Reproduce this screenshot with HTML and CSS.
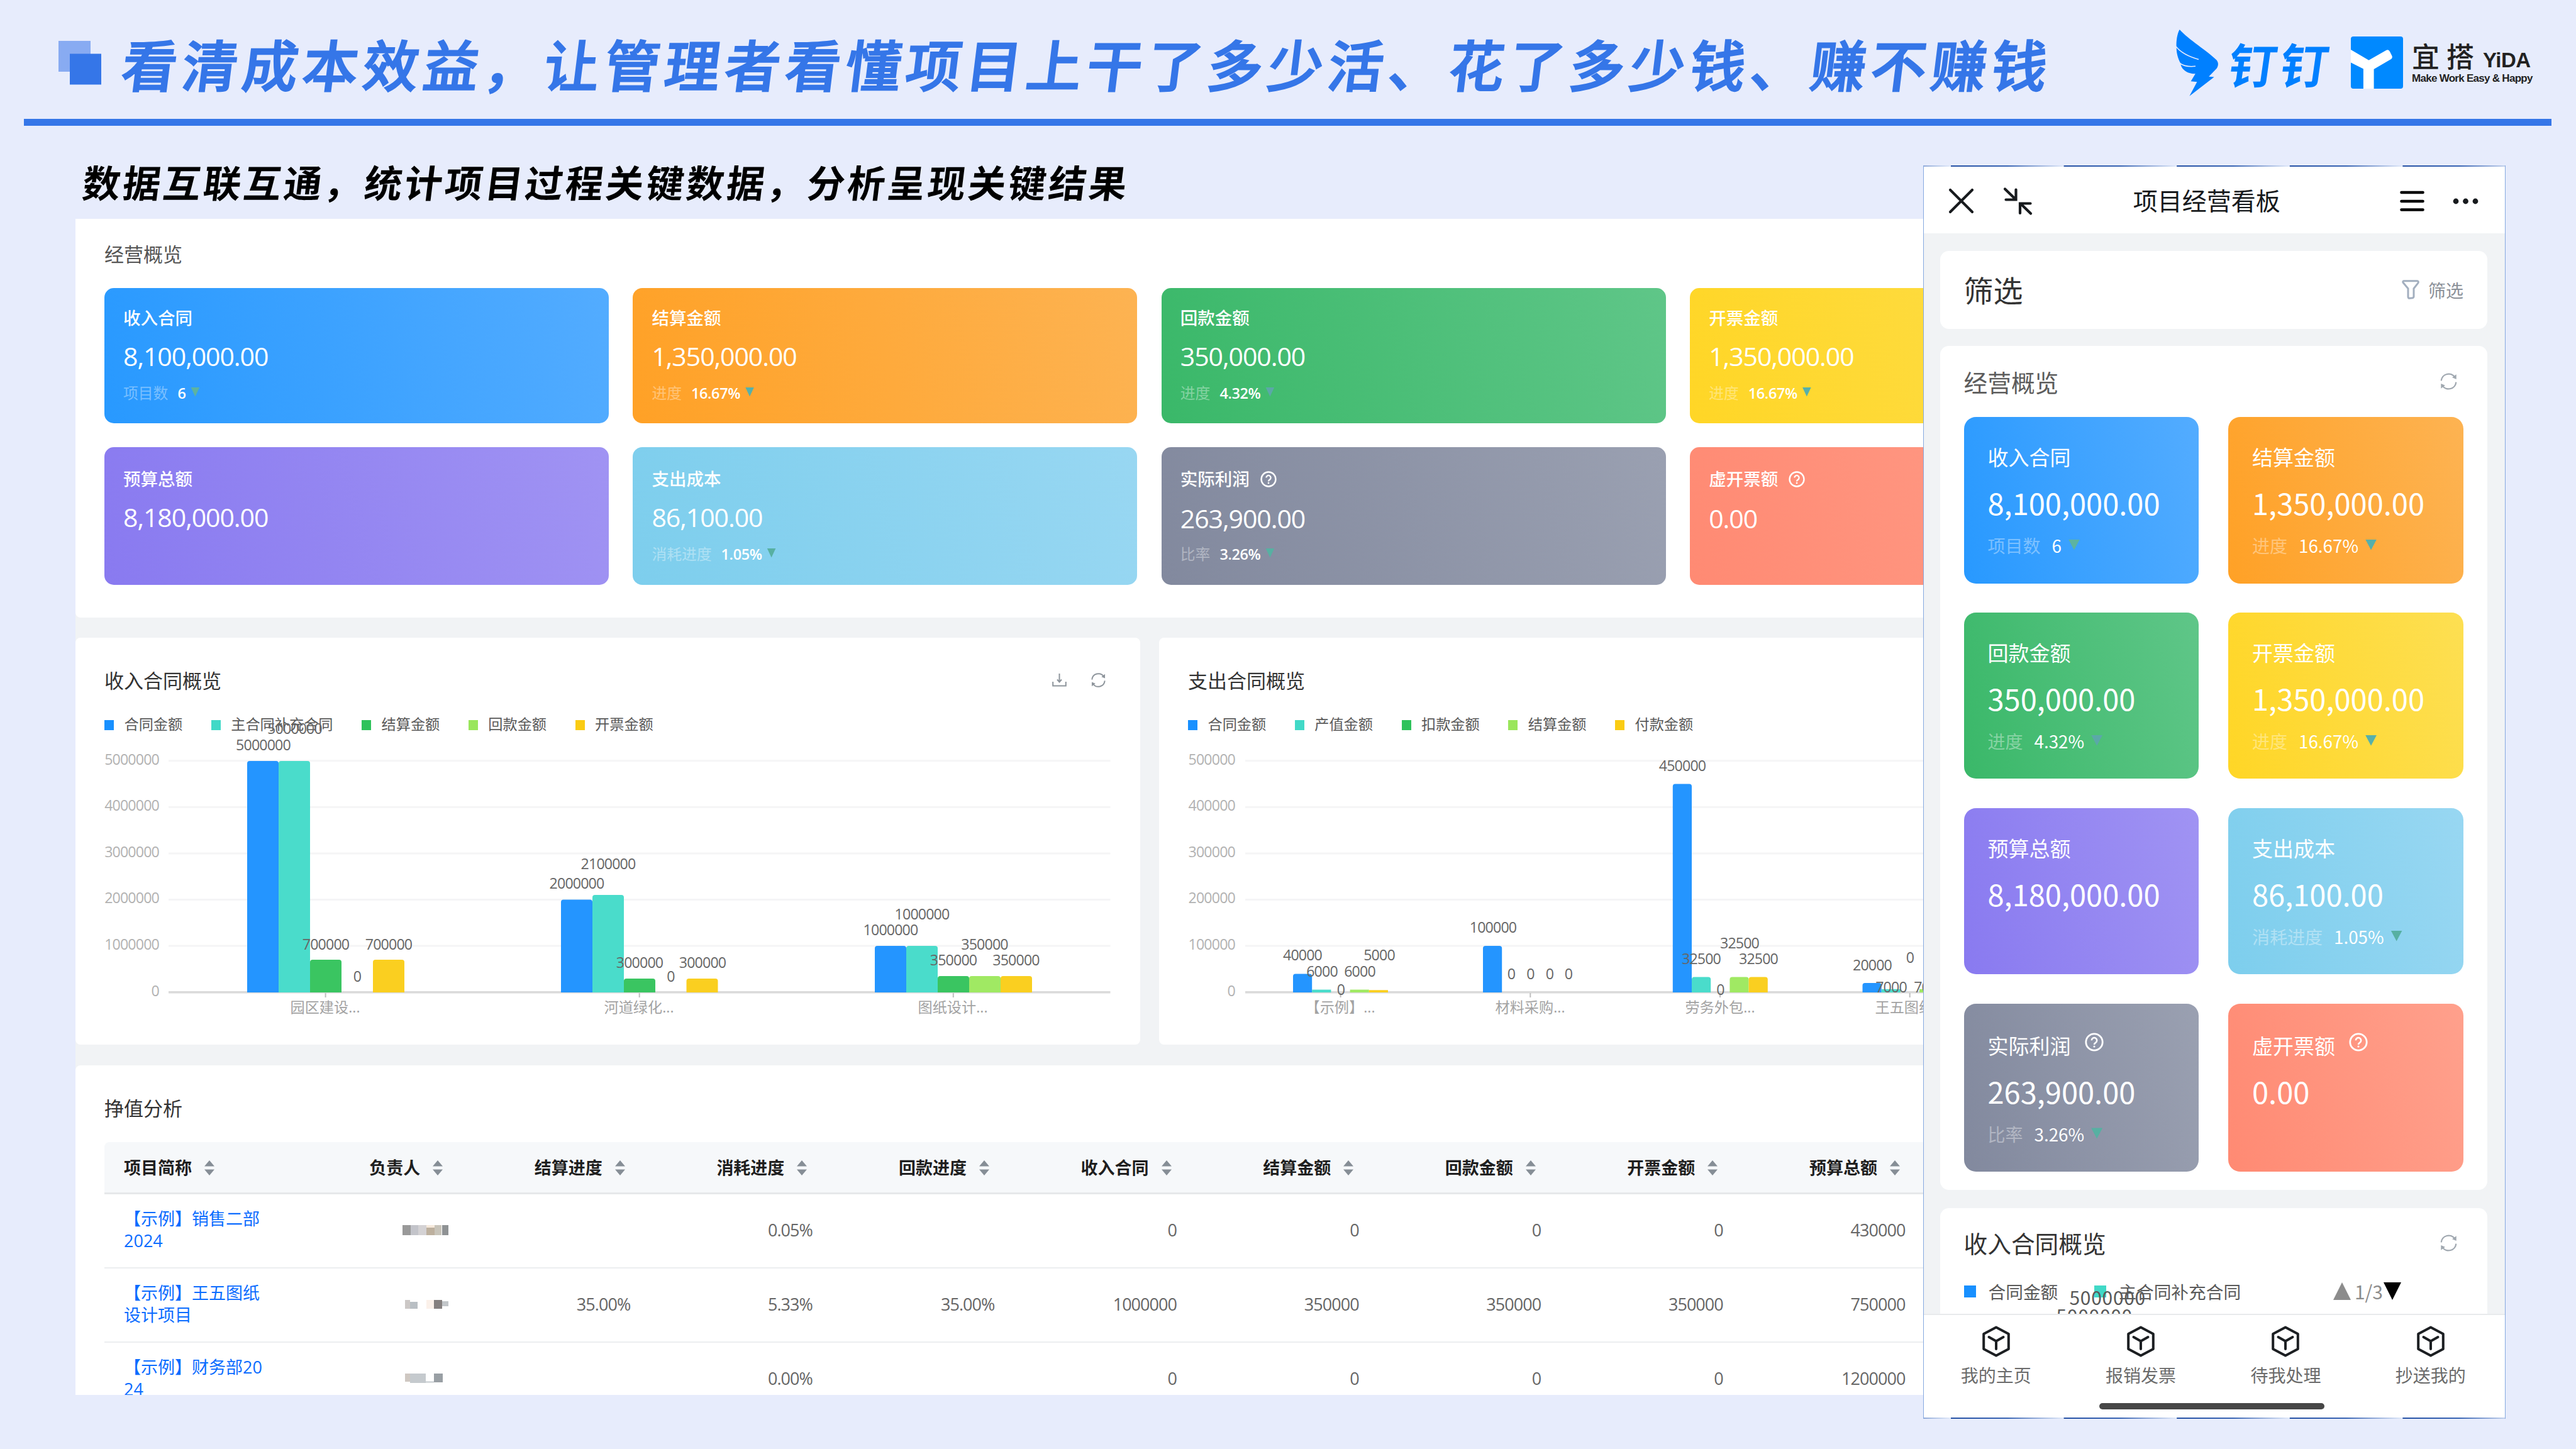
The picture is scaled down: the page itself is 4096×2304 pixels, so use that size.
FILE: index.html
```html
<!DOCTYPE html>
<html lang="zh-CN">
<head>
<meta charset="utf-8">
<title>项目经营看板</title>
<link rel="stylesheet" href="styles.css">
</head>
<body>
<svg class="sprite" aria-hidden="true">
  <symbol id="refresh" viewBox="0 0 28 28"><g fill="none" stroke="currentColor" stroke-width="2.2"><path d="M2.6 13A11.5 11.5 0 0 1 23.6 7.6"/><path d="M25.4 15A11.5 11.5 0 0 1 4.4 20.4"/></g><path d="M25.8 3.2v7.4l-6.4-2.6zM2.2 24.8v-7.4l6.4 2.6z" fill="currentColor"/></symbol>
  <symbol id="help" viewBox="0 0 30 30"><circle cx="15" cy="15" r="13.2" fill="none" stroke="currentColor" stroke-width="2.8"/><path d="M10.8 12.2a4.2 4.2 0 1 1 6.4 3.6c-1.5.9-2.2 1.6-2.2 3.2" fill="none" stroke="currentColor" stroke-width="2.6"/><circle cx="15" cy="22" r="1.6" fill="currentColor"/></symbol>
  <symbol id="cube" viewBox="0 0 46 50"><path d="M23 2.5L42.8 13v24L23 47.5 3.2 37V13z" fill="none" stroke="currentColor" stroke-width="4" stroke-linejoin="round"/><path d="M11.5 18L23 24.5 34.500 18M23 24.500V37" fill="none" stroke="currentColor" stroke-width="4" stroke-linecap="round" stroke-linejoin="round"/></symbol>
  <symbol id="sort" viewBox="0 0 16 24"><path d="M8 0l8 9.500H0zM8 24l8-9.500H0z" fill="#868e96"/></symbol>
</svg>

<header class="topbar">
  <svg class="mark" viewBox="0 0 68 70"><rect width="51" height="49" fill="#88abf2"/><rect x="18" y="20.500" width="50" height="49" fill="#3576e8"/></svg>
  <h1 class="headline">看清成本效益，让管理者看懂项目上干了多少活、花了多少钱、赚不赚钱</h1>
  <div class="brands">
    <svg class="wing" viewBox="0 0 68 106"><path d="M5.700 0C20 16 50 34 64.500 48.500 67.500 52 68 57 64.500 62L52.200 74.800 60.600 75.400 21.400 105.800 33.400 83.200 23.600 82.300 30.800 70.200C20 71 8 64 7.300 53.700 5 50 .5 40 .7 28.600 0 18 2 6 5.700 0z" fill="#0080ff"/><path d="M0 27C7 36 20 43 36 47.500M5 53C12 58 22 59.500 31 58.300" fill="none" stroke="#e7ecfc" stroke-width="1.600"/></svg>
    <span class="ding">钉钉</span>
    <svg class="yida-mark" viewBox="0 0 83 83"><rect width="83" height="83" rx="4" fill="#0089ff"/><path d="M0 21L28.500 37.700 56.500 21.800Q60 20 62 24L65.500 31Q66.500 34 64 36L36.600 51.900V83H19.900V51.600L0 41.500z" fill="#fff"/></svg>
    <div class="yida">
      <div class="yida-name"><span class="yida-cn">宜搭</span><span class="yida-en">YiDA</span></div>
      <div class="yida-tag">Make Work Easy &amp; Happy</div>
    </div>
  </div>
</header>
<div class="rule"></div>

<h2 class="lead">数据互联互通，统计项目过程关键数据，分析呈现关键结果</h2>

<main class="board">
  <section class="panel overview">
    <h3 class="panel-title soft">经营概览</h3>
    <div class="tiles">
      <div class="tile blue"><div class="t-label">收入合同</div><div class="t-num">8,100,000.00</div><div class="t-sub"><span>项目数</span><b>6</b><i class="tri green"></i></div></div>
      <div class="tile orange"><div class="t-label">结算金额</div><div class="t-num">1,350,000.00</div><div class="t-sub"><span>进度</span><b>16.67%</b><i class="tri teal"></i></div></div>
      <div class="tile leaf"><div class="t-label">回款金额</div><div class="t-num">350,000.00</div><div class="t-sub"><span>进度</span><b>4.32%</b><i class="tri steel"></i></div></div>
      <div class="tile yellow"><div class="t-label">开票金额</div><div class="t-num">1,350,000.00</div><div class="t-sub"><span>进度</span><b>16.67%</b><i class="tri teal"></i></div></div>
      <div class="tile purple"><div class="t-label">预算总额</div><div class="t-num">8,180,000.00</div></div>
      <div class="tile sky"><div class="t-label">支出成本</div><div class="t-num">86,100.00</div><div class="t-sub"><span>消耗进度</span><b>1.05%</b><i class="tri sea"></i></div></div>
      <div class="tile slate helped"><div class="t-label">实际利润<svg class="help"><use href="#help"/></svg></div><div class="t-num">263,900.00</div><div class="t-sub"><span>比率</span><b>3.26%</b><i class="tri sea"></i></div></div>
      <div class="tile coral helped"><div class="t-label">虚开票额<svg class="help"><use href="#help"/></svg></div><div class="t-num">0.00</div></div>
    </div>
  </section>

  <div class="charts">
    <section class="panel chart-panel">
      <div class="panel-head"><h3 class="panel-title">收入合同概览</h3>
        <div class="tools"><svg class="dl" viewBox="0 0 23 21"><path d="M1.200 13v6.500h20.600V13M11.500 0v13M8 9.500l3.500 4 3.500-4" fill="none" stroke="currentColor" stroke-width="2"/></svg><svg class="rf"><use href="#refresh"/></svg></div>
      </div>
      <ul class="legend"><li class="c1">合同金额</li><li class="c2">主合同补充合同</li><li class="c3">结算金额</li><li class="c4">回款金额</li><li class="c5">开票金额</li></ul>
      <svg class="plot" width="1600" height="470" viewBox="166 1166 1600 470">
        <path class="grid" d="M268 1209.700H1765.500M268 1283.300H1765.500M268 1356.900H1765.500M268 1430.500H1765.500M268 1504.100H1765.500"/>
        <path class="axis" d="M268 1577.700H1765.500"/><path class="tick" d="M517.600 1579v7M1016.700 1579v7M1515.800 1579v7"/>
        <g class="ylab"><text x="253" y="1215.500">5000000</text><text x="253" y="1289">4000000</text><text x="253" y="1362.500">3000000</text><text x="253" y="1436.200">2000000</text><text x="253" y="1510">1000000</text><text x="253" y="1583.500">0</text></g>
        <g class="f1"><path d="M393 1578V1214q0-4 4-4h42q4 0 4 4V1578z"/><path d="M892 1578V1434.500q0-4 4-4h42q4 0 4 4V1578z"/><path d="M1391 1578V1508q0-4 4-4h42q4 0 4 4V1578z"/></g>
        <g class="f2"><path d="M443 1578V1214q0-4 4-4h42q4 0 4 4V1578z"/><path d="M942 1578V1427q0-4 4-4h42q4 0 4 4V1578z"/><path d="M1441 1578V1508q0-4 4-4h42q4 0 4 4V1578z"/></g>
        <g class="f3"><path d="M493 1578V1530q0-4 4-4h42q4 0 4 4V1578z"/><path d="M992 1578V1560q0-4 4-4h42q4 0 4 4V1578z"/><path d="M1491 1578V1556q0-4 4-4h42q4 0 4 4V1578z"/></g>
        <g class="f4"><path d="M1541 1578V1556q0-4 4-4h42q4 0 4 4V1578z"/></g>
        <g class="f5"><path d="M593 1578V1530q0-4 4-4h42q4 0 4 4V1578z"/><path d="M1091.500 1578V1560q0-4 4-4h42q4 0 4 4V1578z"/><path d="M1591 1578V1556q0-4 4-4h42q4 0 4 4V1578z"/></g>
        <g class="vlab"><text x="418.500" y="1192.500">5000000</text><text x="468.500" y="1167">5000000</text><text x="518" y="1510">700000</text><text x="568" y="1560.500">0</text><text x="618" y="1510">700000</text>
        <text x="917" y="1413">2000000</text><text x="967" y="1381.500">2100000</text><text x="1017" y="1539">300000</text><text x="1066.500" y="1560.500">0</text><text x="1117" y="1539">300000</text>
        <text x="1416" y="1486.500">1000000</text><text x="1466" y="1461.500">1000000</text><text x="1516" y="1535">350000</text><text x="1565.500" y="1510">350000</text><text x="1615.500" y="1535">350000</text></g>
        <g class="xlab"><text x="517" y="1610">园区建设...</text><text x="1016" y="1610">河道绿化...</text><text x="1515" y="1610">图纸设计...</text></g>
      </svg>
    </section>
    <section class="panel chart-panel">
      <div class="panel-head"><h3 class="panel-title">支出合同概览</h3></div>
      <ul class="legend"><li class="c1">合同金额</li><li class="c2">产值金额</li><li class="c3">扣款金额</li><li class="c4">结算金额</li><li class="c5">付款金额</li></ul>
      <svg class="plot" width="1600" height="470" viewBox="1889 1166 1600 470">
        <path class="grid" d="M1980 1209.700H3480M1980 1283.300H3480M1980 1356.900H3480M1980 1430.500H3480M1980 1504.100H3480"/>
        <path class="axis" d="M1980 1577.700H3480"/><path class="tick" d="M2131.600 1579v7M2433.300 1579v7M2735 1579v7M3036.700 1579v7"/>
        <g class="ylab"><text x="1964" y="1215.500">500000</text><text x="1964" y="1289">400000</text><text x="1964" y="1362.500">300000</text><text x="1964" y="1436.200">200000</text><text x="1964" y="1510">100000</text><text x="1964" y="1583.500">0</text></g>
        <g class="f1"><path d="M2056 1578V1552.500q0-4 4-4h22.200q4 0 4 4V1578z"/><path d="M2358 1578V1508q0-4 4-4h22.200q4 0 4 4V1578z"/><path d="M2659.800 1578V1250.500q0-4 4-4h22.200q4 0 4 4V1578z"/><path d="M2961.500 1578V1567q0-4 4-4h22.200q4 0 4 4V1578z"/></g>
        <g class="f2"><path d="M2086.200 1578v-4.400h30.200v4.400z"/><path d="M2690 1578V1557.500q0-4 4-4h22.200q4 0 4 4V1578z"/><path d="M2991.700 1578v-5.200h30.200v5.200z"/></g>
        <g class="f4"><path d="M2146.600 1578v-4.400h30.200v4.400z"/><path d="M2750.400 1578V1557.500q0-4 4-4h22.200q4 0 4 4V1578z"/><path d="M3052 1578v-5.200h30.200v5.200z"/></g>
        <g class="f5"><path d="M2176.800 1578v-3.700h30.200v3.700z"/><path d="M2780.600 1578V1557.500q0-4 4-4h22.200q4 0 4 4V1578z"/></g>
        <g class="vlab"><text x="2071" y="1527">40000</text><text x="2102" y="1552.500">6000</text><text x="2132" y="1582">0</text><text x="2162" y="1552.500">6000</text><text x="2193" y="1527">5000</text>
        <text x="2374" y="1482.500">100000</text><text x="2403" y="1557">0</text><text x="2433.500" y="1557">0</text><text x="2464" y="1557">0</text><text x="2494" y="1557">0</text>
        <text x="2675" y="1225.500">450000</text><text x="2705" y="1533">32500</text><text x="2735.500" y="1582">0</text><text x="2766" y="1508">32500</text><text x="2796" y="1533">32500</text>
        <text x="2977" y="1542.500">20000</text><text x="3007" y="1578">7000</text><text x="3037" y="1531">0</text><text x="3068" y="1578">7000</text></g>
        <g class="xlab"><text x="2131" y="1610">【示例】...</text><text x="2433" y="1610">材料采购...</text><text x="2735" y="1610">劳务外包...</text><text x="3037" y="1610">王五图纸...</text></g>
      </svg>
    </section>
  </div>

  <section class="panel table-panel">
    <h3 class="panel-title">挣值分析</h3>
    <table class="ev">
      <thead><tr>
        <th>项目简称<svg class="sort"><use href="#sort"/></svg></th><th>负责人<svg class="sort"><use href="#sort"/></svg></th><th>结算进度<svg class="sort"><use href="#sort"/></svg></th><th>消耗进度<svg class="sort"><use href="#sort"/></svg></th><th>回款进度<svg class="sort"><use href="#sort"/></svg></th><th>收入合同<svg class="sort"><use href="#sort"/></svg></th><th>结算金额<svg class="sort"><use href="#sort"/></svg></th><th>回款金额<svg class="sort"><use href="#sort"/></svg></th><th>开票金额<svg class="sort"><use href="#sort"/></svg></th><th>预算总额<svg class="sort"><use href="#sort"/></svg></th>
      </tr></thead>
      <tbody>
        <tr><td><a>【示例】销售二部<br>2024</a></td><td><svg class="mosaic" viewBox="0 0 73 16"><path fill="#999" d="M0 0h13v16H0z"/><path fill="#c3c4ca" d="M13 0h12v16H13z"/><path fill="#d4d2d4" d="M25 0h13v16H25z"/><path fill="#bdb09e" d="M38 4h13v12H38z"/><path fill="#f6e9dc" d="M38 0h13v4H38z"/><path fill="#c8c4ba" d="M51 0h11v16H51z"/><path fill="#8f9294" d="M63 0h10v16H63z"/></svg></td><td></td><td>0.05%</td><td></td><td>0</td><td>0</td><td>0</td><td>0</td><td>430000</td></tr>
        <tr><td><a>【示例】王五图纸<br>设计项目</a></td><td><svg class="mosaic" viewBox="0 0 73 16"><path fill="#ccc8c6" d="M4 1h8v14H4z"/><path fill="#b9bfc4" d="M12 4h12v11H12z"/><path fill="#fbf1ea" d="M38 1h12v14H38z"/><path fill="#85807f" d="M50 1h13v14H50z"/><path fill="#c2c6c9" d="M63 3h10v8H63z"/></svg></td><td>35.00%</td><td>5.33%</td><td>35.00%</td><td>1000000</td><td>350000</td><td>350000</td><td>350000</td><td>750000</td></tr>
        <tr><td><a>【示例】财务部20<br>24</a></td><td><svg class="mosaic" viewBox="0 0 73 16"><path fill="#cfc8c2" d="M4 0h8v13H4z"/><path fill="#c5cace" d="M12 0h25v15H12z"/><path fill="#d5d9dc" d="M37 12h13v3H37z"/><path fill="#999fa4" d="M50 0h14v14H50z"/></svg></td><td></td><td>0.00%</td><td></td><td>0</td><td>0</td><td>0</td><td>0</td><td>1200000</td></tr>
      </tbody>
    </table>
  </section>
</main>

<aside class="phone">
  <div class="ph-edge"></div>
  <div class="ph-head">
    <svg class="ph-left" width="134" height="46" viewBox="0 0 134 46"><g fill="none" stroke="#171a1d" stroke-width="4.200" stroke-linecap="round"><path d="M3 5l35 35M38 5L3 40"/><path d="M90 3.500L106 19M107.500 4.500V20.500H91.500"/><path d="M131 42.500L115.500 27.500M114 42V26.500H130.500"/></g></svg>
    <div class="ph-title">项目经营看板</div>
    <svg class="ph-right" width="126" height="34" viewBox="0 0 126 34"><path d="M2.500 3h34M2.500 17h34M2.500 30.500h34" stroke="#000" stroke-width="4.600" stroke-linecap="round"/><g fill="#171a1d"><circle cx="89" cy="17" r="4.400"/><circle cx="104.500" cy="17" r="4.400"/><circle cx="120" cy="17" r="4.400"/></g></svg>
  </div>
  <div class="ph-body">
    <section class="ph-card ph-filter">
      <h3>筛选</h3>
      <div class="ph-fbtn"><svg width="28" height="31" viewBox="0 0 28 31"><path d="M3.500 1.800h21q2.500 0 1.500 3l-7 9v12.500q0 2-2 2.500l-4.500.5q-2.300 0-2.500-2.300V13.800l-8-9.500q-.8-2.500 1.500-2.500z" fill="none" stroke="#a3afbf" stroke-width="3"/></svg>筛选</div>
    </section>
    <section class="ph-card ph-over">
      <div class="ph-row"><h3>经营概览</h3><svg class="rf"><use href="#refresh"/></svg></div>
      <div class="ph-tiles">
        <div class="tile blue"><div class="t-label">收入合同</div><div class="t-num">8,100,000.00</div><div class="t-sub"><span>项目数</span><b>6</b><i class="tri green"></i></div></div>
        <div class="tile orange"><div class="t-label">结算金额</div><div class="t-num">1,350,000.00</div><div class="t-sub"><span>进度</span><b>16.67%</b><i class="tri teal"></i></div></div>
        <div class="tile leaf"><div class="t-label">回款金额</div><div class="t-num">350,000.00</div><div class="t-sub"><span>进度</span><b>4.32%</b><i class="tri steel"></i></div></div>
        <div class="tile yellow"><div class="t-label">开票金额</div><div class="t-num">1,350,000.00</div><div class="t-sub"><span>进度</span><b>16.67%</b><i class="tri teal"></i></div></div>
        <div class="tile purple"><div class="t-label">预算总额</div><div class="t-num">8,180,000.00</div></div>
        <div class="tile sky"><div class="t-label">支出成本</div><div class="t-num">86,100.00</div><div class="t-sub"><span>消耗进度</span><b>1.05%</b><i class="tri sea"></i></div></div>
        <div class="tile slate helped"><div class="t-label">实际利润<svg class="help"><use href="#help"/></svg></div><div class="t-num">263,900.00</div><div class="t-sub"><span>比率</span><b>3.26%</b><i class="tri sea"></i></div></div>
        <div class="tile coral helped"><div class="t-label">虚开票额<svg class="help"><use href="#help"/></svg></div><div class="t-num">0.00</div></div>
      </div>
    </section>
    <section class="ph-card ph-income">
      <div class="ph-row dark"><h3>收入合同概览</h3><svg class="rf"><use href="#refresh"/></svg></div>
      <div class="ph-legend">
        <span class="c1">合同金额</span><span class="c2">主合同补充合同</span>
        <div class="pager"><svg width="28" height="28" viewBox="0 0 28 28"><path d="M14 0l14 28H0z" fill="#8c8c8c"/></svg>1/3<svg width="28" height="28" viewBox="0 0 28 28"><path d="M14 28L28 0H0z" fill="#000"/></svg></div>
        <div class="clash one">5000000</div><div class="clash two">5000000</div>
      </div>
    </section>
  </div>
  <nav class="ph-tabs">
    <div><svg><use href="#cube"/></svg>我的主页</div><div><svg><use href="#cube"/></svg>报销发票</div><div><svg><use href="#cube"/></svg>待我处理</div><div><svg><use href="#cube"/></svg>抄送我的</div>
  </nav>
  <div class="ph-home"></div>
  <div class="ph-edge"></div>
</aside>
</body>
</html>
```
FILE: styles.css
```css
* { box-sizing: border-box; margin: 0; padding: 0; }
html, body { width: 4096px; height: 2304px; overflow: hidden; }
body {
  position: relative;
  background: #e7ecfc;
  font-family: "Open Sans", "Noto Sans CJK SC", sans-serif;
  color: #333;
}
svg { display: block; flex: none; }
.sprite { position: absolute; width: 0; height: 0; }
h1, h2, h3 { font-weight: 400; }
ul { list-style: none; }

/* slide header */
.topbar { display: flex; align-items: center; height: 189px; padding: 10px 66px 0 93px; }
.mark { width: 68px; height: 70px; }
.headline {
  margin-left: 34px;
  font: 500 88px/120px "Noto Sans CJK SC", sans-serif;
  letter-spacing: 7.900px;
  color: #3576e8;
  -webkit-text-stroke: 2.200px #3576e8;
  white-space: nowrap;
  transform: skewX(-7deg);
}
.brands { display: flex; align-items: center; margin-left: auto; }
.wing { width: 68px; height: 106px; }
.ding {
  margin-left: 17px;
  font: 700 76px/100px "Noto Sans CJK SC", sans-serif;
  letter-spacing: 6px;
  color: #0080ff;
  transform: skewX(-8deg);
}
.yida-mark { width: 83px; height: 83px; margin-left: 29px; }
.yida { margin-left: 14px; width: 195px; color: #222; }
.yida-name { display: flex; align-items: baseline; height: 50px; }
.yida-cn { font: 500 44px/50px "Noto Sans CJK SC", sans-serif; letter-spacing: 11px; }
.yida-en { margin-left: 3px; font: 700 33px/50px "Liberation Sans", sans-serif; letter-spacing: -.5px; }
.yida-tag { font: 700 17px/24px "Liberation Sans", sans-serif; letter-spacing: -.720px; white-space: nowrap; }
.rule { height: 10.500px; margin: 0 39px 0 38px; background: #3576e8; }

.lead {
  height: 148px;
  padding: 48px 0 0 132px;
  font: 700 60px/80px "Noto Sans CJK SC", sans-serif;
  letter-spacing: 4px;
  color: #000;
  transform: skewX(-7deg);
  transform-origin: 0 60%;
}

/* dashboard */
.board {
  display: flex; flex-direction: column; gap: 32px;
  width: 2940px; height: 1870.500px; margin-left: 120px;
  background: #f1f3f5; overflow: hidden;
}
.panel { flex: none; width: 3420px; background: #fff; border-radius: 8px; padding: 0 46px; }
.panel-title { font-size: 31px; line-height: 40px; color: #333; }
.panel-title.soft { color: #555; }
.overview { height: 634px; padding-top: 36px; border-radius: 0 0 8px 8px; }
.tiles { display: grid; grid-template-columns: repeat(4, 802px); grid-template-rows: 215px 219px; gap: 38px 38.400px; margin-top: 34px; }

.tile { color: #fff; border-radius: 15px; padding: 28px 30px; }
.tile:nth-child(n+5) { padding-top: 31px; }
.blue { background: linear-gradient(75deg, #2899ff, #53acff); }
.orange { background: linear-gradient(75deg, #ffa126, #fdb352); }
.leaf { background: linear-gradient(75deg, #3ab869, #5fc688); }
.yellow { background: linear-gradient(75deg, #ffd626, #fddf52); }
.purple { background: linear-gradient(75deg, #897af0, #a093f3); }
.sky { background: linear-gradient(75deg, #7dceed, #98d7f2); }
.slate { background: linear-gradient(75deg, #82899e, #9aa0b1); }
.coral { background: linear-gradient(75deg, #ff8a73, #ffa08c); }
.t-label { display: flex; align-items: center; font-size: 27.500px; font-weight: 500; line-height: 40px; }
.t-num { margin-top: 15px; font-size: 41px; font-weight: 500; line-height: 50px; letter-spacing: -1.050px; }
.helped .t-num { margin-top: 17px; }
.t-sub { display: flex; align-items: center; margin-top: 19px; font-size: 23.800px; line-height: 30px; }
.helped .t-sub { margin-top: 17px; }
.t-sub span { opacity: .36; }
.t-sub b { margin-left: 15px; font-size: 23.500px; font-weight: 600; letter-spacing: -.4px; }
.help { width: 26px; height: 26px; margin-left: 17px; }
.tri { width: 14px; height: 15px; margin: -3px 0 0 8px; clip-path: polygon(0 0, 100% 0, 50% 100%); }
.green { background: #5db3a0; }
.teal { background: #56b0ab; }
.steel { background: #5ba8a8; }
.sea { background: #57b0a2; }

.charts { display: flex; gap: 30px; width: 3420px; height: 647px; flex: none; }
.chart-panel { width: 1693px; padding-top: 48px; }
.panel-head { display: flex; justify-content: space-between; align-items: center; }
.tools { display: flex; align-items: center; gap: 38px; margin-right: 8px; color: #8e959c; }
.dl { width: 23px; height: 21px; }
.tools .rf { width: 25px; height: 25px; }
.legend { display: flex; gap: 45.500px; margin-top: 35px; font-size: 23.200px; line-height: 29px; color: #595959; }
.legend li { display: flex; align-items: center; gap: 16.500px; }
.legend li::before { content: ""; width: 15px; height: 16px; margin-top: 3px; background: currentColor; }
.c1::before { background: #1890ff !important; }
.c2::before { background: #41d9c7 !important; }
.c3::before { background: #2fc25b !important; }
.c4::before { background: #9ae65c !important; }
.c5::before { background: #facc14 !important; }
.plot { overflow: visible; font-size: 23.200px; }
.grid { stroke: #f5f5f6; stroke-width: 3; }
.axis { stroke: #dadada; stroke-width: 3.500; }
.tick { stroke: #bfbfbf; stroke-width: 2; }
.ylab { text-anchor: end; fill: #b2b2b2; letter-spacing: -.85px; }
.vlab { text-anchor: middle; fill: #666; letter-spacing: -.85px; }
.xlab { text-anchor: middle; fill: #a3a3a3; }
.f1 { fill: #2495ff; }
.f2 { fill: #4adccb; }
.f3 { fill: #3ac561; }
.f4 { fill: #a0e963; }
.f5 { fill: #facf20; }

.table-panel { height: 560px; padding-top: 48px; margin-top: 1px; }
.ev { margin-top: 34px; width: 2896px; table-layout: fixed; border-collapse: separate; border-spacing: 0; font-size: 27px; color: #666; }
.ev th { height: 83px; background: #f6f8fa; border-bottom: 3px solid #e6e8ea; font-weight: 600; color: #1f1f1f; text-align: right; padding: 3px 41px 0 31px; white-space: nowrap; line-height: 34px; }
.ev th:first-child { text-align: left; border-radius: 8px 0 0 0; }
.sort { display: inline-block; width: 16px; height: 24px; margin-left: 20px; vertical-align: -2px; }
.ev td { height: 118px; padding: 0 32.500px 2px; border-bottom: 2px solid #eceef0; text-align: right; letter-spacing: -.95px; line-height: 35px; }
.ev td:first-child { padding: 0 20px 3px 31px; text-align: left; letter-spacing: 0; white-space: nowrap; }
.ev a { color: #0b6cff; }
.mosaic { width: 73px; height: 16px; margin-left: auto; }

/* phone mock, laid over the dashboard */
.phone {
  position: absolute; left: 3057.500px; top: 263px; width: 926.500px; height: 1992.500px;
  display: flex; flex-direction: column;
  background: #f1f3f5; border: solid #86a9e0; border-width: 0 1.500px;
  font-family: "Noto Sans CJK SC", sans-serif;
}
.ph-edge { flex: none; height: 2px; background: linear-gradient(90deg, #2450a4 0, #3763b3 50%, #e3ebfb 100%) 43px 0 / 179.600px 2px repeat-x; }
.ph-head { flex: none; display: flex; justify-content: space-between; align-items: center; height: 105.500px; padding: 4px 41px 0 39px; background: #fff; }
.ph-title { font-size: 39px; line-height: 50px; margin: -6px 0 0 -30px; color: #171a1d; }
.ph-body { flex: none; height: 1718.500px; padding: 28.500px 28px 0 26px; overflow: hidden; }
.ph-card { background: #fff; border-radius: 14px; padding: 0 38px; }
.ph-filter { display: flex; justify-content: space-between; align-items: center; height: 123.500px; }
.ph-filter h3 { font-size: 47px; line-height: 60px; margin-top: -1px; color: #333; }
.ph-fbtn { display: flex; align-items: center; gap: 14px; font-size: 28px; color: #8b9199; }
.ph-over { height: 1341.500px; margin-top: 27.500px; padding-top: 32px; }
.ph-row { display: flex; justify-content: space-between; align-items: center; height: 50px; }
.ph-row h3 { font-size: 37.700px; line-height: 50px; color: #5c5c5c; }
.ph-row.dark h3 { color: #333; margin-top: -3px; }
.ph-row .rf { width: 29px; height: 29px; margin: -2px 9px 0 0; color: #a0a8b0; }
.ph-tiles { display: grid; grid-template-columns: 373.500px 373.500px; grid-template-rows: 264.500px 264px 264px 267.500px; column-gap: 47px; row-gap: 46.800px; margin-top: 31px; }
.ph-tiles .tile { border-radius: 19px; padding: 38px 38px 0; }
.ph-tiles .helped.tile { padding-top: 41px; }
.ph-tiles .t-label { font-size: 33px; font-weight: 400; line-height: 50px; }
.ph-tiles .t-num { font-size: 47px; font-weight: 400; line-height: 60px; margin-top: 18px; letter-spacing: 0; }
.ph-tiles .t-sub { font-size: 28px; line-height: 40px; margin-top: 18px; }
.ph-tiles .t-sub b { font-size: 27.800px; font-weight: 400; margin-left: 18px; letter-spacing: 0; }
.ph-tiles .tri { width: 18px; height: 17px; margin: -2px 0 0 11px; }
.ph-tiles .help { width: 30px; height: 30px; margin: -9px 0 0 22px; }
.ph-income { height: 330px; margin-top: 29px; padding-top: 32px; }
.ph-legend { position: relative; display: flex; align-items: center; height: 40px; margin-top: 30px; font-size: 27.700px; color: #595959; }
.ph-legend > span { display: flex; align-items: center; gap: 20px; margin-right: 58px; white-space: nowrap; }
.ph-legend > span::before { content: ""; width: 19px; height: 19px; margin-top: 2px; }
.ph-legend > span + span { margin-right: 0; }
.pager { display: flex; align-items: center; gap: 6px; margin: 0 99px 0 auto; font-size: 30px; color: #8c8c8c; }
.pager svg:last-child { margin-left: -5px; }
.clash { position: absolute; font-size: 30px; line-height: 40px; letter-spacing: .7px; color: #595959; }
.clash.one { left: 168px; top: 9px; }
.clash.two { left: 147px; top: 38px; }
.ph-tabs { flex: none; display: grid; grid-template-columns: repeat(4, 1fr); height: 142px; padding: 17px 3px 0 0; background: #fff; border-top: 2px solid #e8eaec; }
.ph-tabs div { display: flex; flex-direction: column; align-items: center; gap: 8px; font-size: 28px; line-height: 40px; color: #6b6b6b; }
.ph-tabs svg { width: 46px; height: 50px; color: #1c1f22; }
.ph-home { flex: 1; background: #fff; }
.ph-home::before { content: ""; display: block; width: 358px; height: 10px; margin-left: 279px; border-radius: 5px; background: #474747; }
```
